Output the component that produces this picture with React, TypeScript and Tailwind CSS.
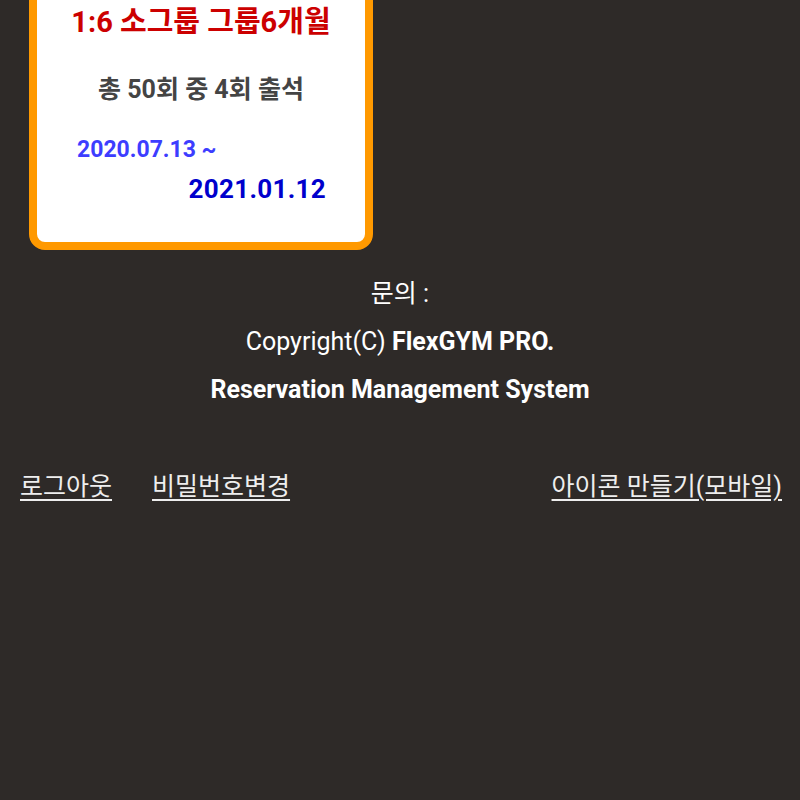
export default function App() {
  return (
    <div
      className="min-h-screen overflow-hidden bg-[#2e2a28]"
      style={{ fontFamily: 'Roboto, "Noto Sans CJK KR", sans-serif' }}
    >
      <section className="ml-[29px] -mt-[20px] w-[344px] rounded-[16px] border-8 border-[#ff9900] bg-white pb-[36px] pt-[14px]">
        <h1 className="text-center text-[29px] font-bold leading-[40px] text-[#cc0000]">
          1:6 소그룹 그룹6개월
        </h1>
        <p className="mt-[31px] text-center text-[25px] font-bold leading-[34px] text-[#444444]">
          총 50회 중 4회 출석
        </p>
        <p className="mt-[28px] pl-[40px] text-[23px] font-bold leading-[30px] text-[#3d3dff]">
          2020.07.13 ~
        </p>
        <p className="mt-[7px] pr-[39px] text-right text-[26px] font-bold leading-[34px] tracking-[0.3px] text-[#0000cc]">
          2021.01.12
        </p>
      </section>

      <footer className="mt-[20px] text-center text-[25px] leading-[48px] text-white">
        <p>문의 :</p>
        <p>
          Copyright(C) <b className="font-bold">FlexGYM PRO.</b>
        </p>
        <p className="font-bold">Reservation Management System</p>
      </footer>

      <nav className="mt-[57px] flex justify-between pl-[20px] pr-[18px] text-[25px] leading-[32px] text-[#eeeeee]">
        <div className="flex gap-[40px]">
          <a href="#" className="underline underline-offset-4">
            로그아웃
          </a>
          <a href="#" className="underline underline-offset-4">
            비밀번호변경
          </a>
        </div>
        <a href="#" className="underline underline-offset-4">
          아이콘 만들기(모바일)
        </a>
      </nav>
    </div>
  );
}
